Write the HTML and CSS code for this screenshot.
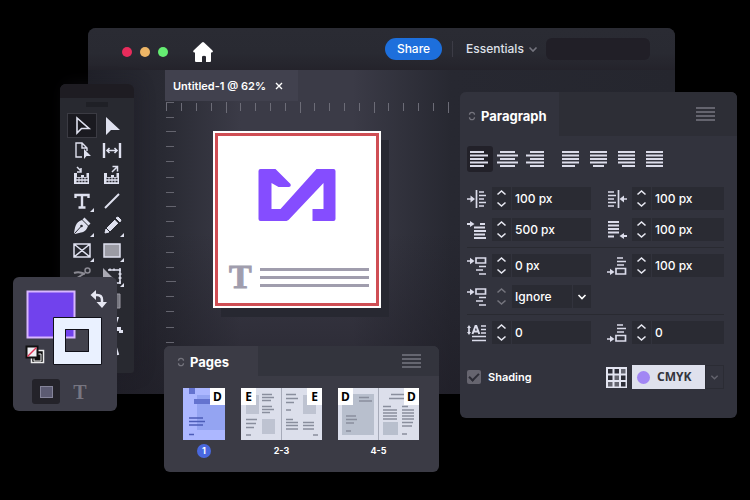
FILE: index.html
```html
<!DOCTYPE html>
<html lang="en">
<head>
<meta charset="utf-8">
<title>Untitled-1</title>
<link rel="stylesheet" href="styles.css">
</head>
<body>
<svg class="sprite" aria-hidden="true">
  <symbol id="updown" viewBox="0 0 19 23"><path d="M5.500 7.500 9.500 4l4 3.500M5.500 15.500l4 3.500 4-3.500" fill="none" stroke="currentColor" stroke-width="1.600"/></symbol>
  <symbol id="chev" viewBox="0 0 10 10"><path d="M1.500 3.500 5 7l3.500-3.500" fill="none" stroke="currentColor" stroke-width="1.600"/></symbol>
  <symbol id="sort" viewBox="0 0 8 10"><path d="M1.500 3.800a2.500 2.500 0 0 1 5 0M1.500 6.200a2.500 2.500 0 0 0 5 0" fill="none" stroke="currentColor" stroke-width="1.300"/></symbol>
  <symbol id="menu" viewBox="0 0 20 14"><path d="M0 1h19M0 5h19M0 9h19M0 13h19" stroke="currentColor" stroke-width="1.400"/></symbol>
  <symbol id="al-left" viewBox="0 0 22 18"><path d="M1 2h14M1 5.500h18M1 9h14M1 12.500h18M1 16h14" stroke="currentColor" stroke-width="2"/></symbol>
  <symbol id="al-center" viewBox="0 0 22 18"><path d="M3 2h15M0 5.500h21M3 9h15M0 12.500h21M3 16h15" stroke="currentColor" stroke-width="2"/></symbol>
  <symbol id="al-right" viewBox="0 0 22 18"><path d="M5 2h14M1 5.500h18M5 9h14M1 12.500h18M5 16h14" stroke="currentColor" stroke-width="2"/></symbol>
  <symbol id="ju-left" viewBox="0 0 22 18"><path d="M1 2h17M1 5.500h17M1 9h17M1 12.500h17M1 16h13" stroke="currentColor" stroke-width="2"/></symbol>
  <symbol id="ju-center" viewBox="0 0 22 18"><path d="M1 2h17M1 5.500h17M1 9h17M1 12.500h17M4 16h11" stroke="currentColor" stroke-width="2"/></symbol>
  <symbol id="ju-right" viewBox="0 0 22 18"><path d="M1 2h17M1 5.500h17M1 9h17M1 12.500h17M5 16h13" stroke="currentColor" stroke-width="2"/></symbol>
  <symbol id="ju-all" viewBox="0 0 22 18"><path d="M1 2h17M1 5.500h17M1 9h17M1 12.500h17M1 16h17" stroke="currentColor" stroke-width="2"/></symbol>
  <symbol id="in-left" viewBox="0 0 20 18"><path d="M9.500 0v18M12 2h5M12 5.500h7M12 9h5M12 12.500h7M12 16h5M0 9h5" stroke="currentColor" stroke-width="1.700"/><path d="M3.500 5.500 8 9l-4.500 3.500z" fill="currentColor"/></symbol>
  <symbol id="in-right" viewBox="0 0 20 18"><path d="M11.500 0v18M1 2h6M1 5.500h8M1 9h6M1 12.500h8M1 16h6M15 9h5" stroke="currentColor" stroke-width="1.700"/><path d="M17 5.500 12.500 9l4.500 3.500z" fill="currentColor"/></symbol>
  <symbol id="in-first" viewBox="0 0 20 18"><path d="M13 3h5M7 6.500h11M7 10h12M7 13.500h11M7 17h12M0 3h4" stroke="currentColor" stroke-width="1.800"/><path d="M3 0 7.500 3 3 6z" fill="currentColor"/></symbol>
  <symbol id="in-last" viewBox="0 0 20 18"><path d="M1 1h11M1 4.500h11M1 8h11M1 11.500h11M1 15.500h6M16 15h4" stroke="currentColor" stroke-width="1.800"/><path d="M17 12 12.500 15l4.500 3z" fill="currentColor"/></symbol>
  <symbol id="sp-before" viewBox="0 0 20 18"><path d="M9 1h9.500v5H9zM12 9.500h7M9 13h7M12 17h7M0 4h4" fill="none" stroke="currentColor" stroke-width="1.700"/><path d="M3 .8 7.500 4 3 7.200z" fill="currentColor"/></symbol>
  <symbol id="sp-after" viewBox="0 0 20 18"><path d="M10 1h6M10 4.500h9M10 8h7M9 11.500h9.500V17H9zM0 15h4" fill="none" stroke="currentColor" stroke-width="1.700"/><path d="M3 11.800 7.500 15 3 18z" fill="currentColor"/></symbol>
  <symbol id="drop" viewBox="0 0 20 18"><path d="M2 3v6M14 2h5M14 5.500h5M14 9h5M5 12.500h14M5 16.500h14" stroke="currentColor" stroke-width="1.700"/><path d="M0 4 2 1l2 3zM0 8l2 3 2-3z" fill="currentColor"/><path d="M5.500 10 8.500 2h.8l3 8M7 7.500h4.500" fill="none" stroke="currentColor" stroke-width="2"/></symbol>
</svg>

<main class="desktop">
  <section class="window">
    <header class="titlebar">
      <div class="lights"><i class="red"></i><i class="amber"></i><i class="green"></i></div>
      <svg class="home" viewBox="0 0 22 22"><path d="M10 1.500q1-1 2 0l8.500 8q1.200 1.500-.5 2h-1V20q0 1-1 1h-4v-5.500q-2-1.500-4 0V21H4q-1 0-1-1v-8.500H2q-1.500-.6-.5-2z" fill="#fff"/></svg>
      <button class="share">Share</button>
      <label class="workspace"><select aria-label="Workspace"><option>Essentials</option></select><svg><use href="#chev"/></svg></label>
      <div class="search"></div>
    </header>
    <div class="document">
      <div class="doc-tab">Untitled-1 @ 62% <button aria-label="Close"><svg viewBox="0 0 8 8"><path d="m1 1 6 6M7 1 1 7" stroke="#fff" stroke-width="1.400"/></svg></button></div>
      <div class="canvas">
        <svg class="ruler-x"><defs><pattern id="tx" width="74" height="12" patternUnits="userSpaceOnUse"><path d="M16.500 2v8M31.500 2v8M46.500 2v8M61.500 1v11M1.500 2v8" stroke="#6c6c77"/></pattern></defs><rect width="100%" height="12" fill="url(#tx)"/></svg>
        <svg class="ruler-y"><defs><pattern id="ty" width="12" height="75" patternUnits="userSpaceOnUse"><path d="M1 1.500h8M1 16.500h8M1 30.500h10M1 45.500h8M1 60.500h8" stroke="#64646e"/></pattern></defs><rect width="12" height="100%" fill="url(#ty)"/></svg>
        <article class="artboard">
          <svg class="logo" viewBox="0 0 77 52"><path d="M2 0h15l15 15q1 3-2 3H20l-7-4v26h9L58 0h17q2 0 2 2v48q0 2-2 2H54V40h11V14L30 51l-2 1H2q-2 0-2-2V2q0-2 2-2z" fill="#854dff"/></svg>
          <div class="caption"><b>T</b><div><i></i><i></i><i></i></div></div>
        </article>
      </div>
    </div>
  </section>

  <aside class="tools" aria-label="Tools">
    <div class="grip"></div>
    <div class="tool-grid">
      <button class="on" aria-label="Selection"><svg viewBox="0 0 24 24"><path d="M7 4v15l4.500-4.500H19z" fill="none" stroke="currentColor" stroke-width="1.600"/></svg></button>
      <button aria-label="Direct selection"><svg viewBox="0 0 24 24"><path d="M6 3v18l5-5h9z" fill="currentColor"/></svg></button>
      <button aria-label="Page"><svg viewBox="0 0 24 24"><path d="M12 18H6V4h6l5 5v3M12 4v5h5" fill="none" stroke="currentColor" stroke-width="1.400"/><path d="M14 10v10l2.500-3H21z" fill="currentColor"/></svg></button>
      <button aria-label="Gap"><svg viewBox="0 0 24 24"><path d="M4 4v15M20 4v15" stroke="currentColor" stroke-width="2.400"/><path d="M7 11.500h10M9.500 9 7 11.500 9.500 14m5-5 2.500 2.500-2.500 2.500" fill="none" stroke="currentColor" stroke-width="1.600"/></svg></button>
      <button aria-label="Content collector"><svg viewBox="0 0 24 24"><path d="M4 9v11h15V9h-2.500v4H14v-2h-3v2H7V9z" fill="currentColor"/><path d="m7 3 4 4M11 4v4H7" fill="none" stroke="currentColor" stroke-width="1.500"/><path d="M6.500 14.500h11M6.500 17.500h11" stroke="#282930" stroke-width="1.400" stroke-dasharray="2 1"/></svg></button>
      <button aria-label="Content placer"><svg viewBox="0 0 24 24"><path d="M4 9v11h15V9h-2.500v4H14v-2h-3v2H7V9z" fill="currentColor"/><path d="m12 8 5-5M12.500 2.500h5v5" fill="none" stroke="currentColor" stroke-width="1.500"/><path d="M6.500 14.500h11M6.500 17.500h11" stroke="#282930" stroke-width="1.400" stroke-dasharray="2 1"/></svg></button>
      <button class="more" aria-label="Type"><svg viewBox="0 0 24 24"><path d="M5.500 9V6h13v3M12 5v13.500M8.500 18.500h7" fill="none" stroke="currentColor" stroke-width="2.400"/></svg></button>
      <button aria-label="Line"><svg viewBox="0 0 24 24"><path d="M5 19 19 5" stroke="currentColor" stroke-width="2"/></svg></button>
      <button class="more" aria-label="Pen"><svg viewBox="0 0 24 24"><path d="m14.500 3.500 6 6-2 2-6-6zM12 6l6 6c-1 3-3 6-7 6.500L5 20l-1-1c1-5 1-11 8-13z" fill="currentColor"/><path d="m4.500 19.500 6.500-7" stroke="#282930"/><circle cx="11.500" cy="12" r="1.300" fill="#282930"/></svg></button>
      <button class="more" aria-label="Pencil"><svg viewBox="0 0 24 24"><path d="m16 4 2-1 3 3-1 2zM15 6l3 3-8 8-3-3zM6 15l3 3-4 1z" fill="currentColor" stroke="currentColor"/><path d="m14 4.500 5.500 5.500" stroke="#282930"/></svg></button>
      <button class="more" aria-label="Frame"><svg viewBox="0 0 24 24"><path d="M4 5h16v13H4zl16 13M20 5 4 18" fill="none" stroke="currentColor" stroke-width="1.500"/></svg></button>
      <button class="more" aria-label="Rectangle"><svg viewBox="0 0 24 24"><path d="M4 5h16v13H4z" fill="#9b9ba4" stroke="currentColor" stroke-width="1.500"/></svg></button>
      <button class="dim" aria-label="Scissors"><svg viewBox="0 0 24 24"><path d="M4 9q5-2 11 1M4 16l11-7" fill="none" stroke="currentColor" stroke-width="2"/><circle cx="17.500" cy="6.500" r="2.500" fill="none" stroke="currentColor" stroke-width="1.500"/></svg></button>
      <button class="more" aria-label="Transform"><svg viewBox="0 0 24 24"><path d="M3 4v10h10z" fill="#aaa9b3"/><path d="M8 6h12v13h-7" fill="none" stroke="currentColor" stroke-width="1.600"/><path d="M10 4.500v2M14 4.500v2M20 4v3M20 17v3M18.500 10h3M18.500 14h3" stroke="currentColor" stroke-width="1.500"/></svg></button>
      <span></span>
      <button aria-label="Gradient"><svg viewBox="0 0 24 24"><path d="M4 5h16v14H4z" fill="#777780" stroke="#9998a2"/></svg></button>
      <span></span>
      <button aria-label="Eyedropper"><svg viewBox="0 0 24 24"><path d="M15 3h4l-2 6zM15 13h6v3h2v3h-4v-2h-4z" fill="currentColor"/></svg></button>
      <span></span>
      <button aria-label="Zoom"><svg viewBox="0 0 24 24"><path d="m15 6 3 10" stroke="currentColor" stroke-width="2.500"/></svg></button>
    </div>
  </aside>

  <aside class="swatches" aria-label="Fill and stroke">
    <svg class="fill-stroke" viewBox="0 0 103 94">
      <path d="M14.500 14.500h47v46h-47z" fill="#7142ed" stroke="#d8b6ff" stroke-width="2"/>
      <path fill-rule="evenodd" d="M40.500 40.500h48v47h-48zM52.500 52.500h23v22h-23z" fill="#eaf1ff" stroke="#111119"/>
      <path d="M53 53h22v21H53z" fill="#42424d"/><path d="M53 53h8v7h-8z" fill="#7142ed"/><path d="M61.500 53v7.500H53" fill="none" stroke="#d8b6ff" stroke-width="2"/>
      <path d="M52.500 52.500h23v22h-23z" fill="none" stroke="#111119"/>
      <path d="M81 18h3q5 0 5 5v3" fill="none" stroke="#e6e7f2" stroke-width="2.500"/><path d="m77.500 18 5.500-5v10zM83.500 25h10.500l-5 6z" fill="#e6e7f2"/>
      <path d="M18.500 73.500h12v12h-12z" fill="#111" stroke="#eee" stroke-width="1.500"/><path d="M21 77h7v7h-7z" fill="#111" stroke="#eee"/>
      <path d="M13.500 69.500h11v11h-11z" fill="#f0f0f4" stroke="#111" stroke-width="2"/><path d="m14.500 79.500 9-9" stroke="#df3659" stroke-width="1.500"/>
    </svg>
    <div class="targets"><button class="on" aria-label="Container"><i></i></button><button aria-label="Text">T</button></div>
  </aside>

  <section class="panel paragraph">
    <header><h2><svg><use href="#sort"/></svg>Paragraph</h2><button aria-label="Paragraph menu"><svg><use href="#menu"/></svg></button></header>
    <div class="body">
      <div class="aligns">
        <button class="on" aria-label="Left"><svg><use href="#al-left"/></svg></button><button aria-label="Center"><svg><use href="#al-center"/></svg></button><button aria-label="Right"><svg><use href="#al-right"/></svg></button>
        <button class="second" aria-label="Justify left"><svg><use href="#ju-left"/></svg></button><button aria-label="Justify center"><svg><use href="#ju-center"/></svg></button><button aria-label="Justify right"><svg><use href="#ju-right"/></svg></button><button aria-label="Justify all"><svg><use href="#ju-all"/></svg></button>
      </div>
      <div class="fields">
        <label class="field"><svg><use href="#in-left"/></svg><button aria-label="Step left indent"><svg><use href="#updown"/></svg></button><input aria-label="Left indent" value="100 px"></label>
        <label class="field"><svg><use href="#in-right"/></svg><button aria-label="Step right indent"><svg><use href="#updown"/></svg></button><input aria-label="Right indent" value="100 px"></label>
        <label class="field"><svg><use href="#in-first"/></svg><button aria-label="Step first line"><svg><use href="#updown"/></svg></button><input aria-label="First line indent" value="500 px"></label>
        <label class="field"><svg><use href="#in-last"/></svg><button aria-label="Step last line"><svg><use href="#updown"/></svg></button><input aria-label="Last line indent" value="100 px"></label>
      </div>
      <div class="fields">
        <label class="field"><svg><use href="#sp-before"/></svg><button aria-label="Step space before"><svg><use href="#updown"/></svg></button><input aria-label="Space before" value="0 px"></label>
        <label class="field"><svg><use href="#sp-after"/></svg><button aria-label="Step space after"><svg><use href="#updown"/></svg></button><input aria-label="Space after" value="100 px"></label>
        <label class="field pick"><svg><use href="#sp-before"/></svg><button class="off" aria-label="Step between"><svg><use href="#updown"/></svg></button><select aria-label="Space between"><option>Ignore</option></select><svg class="arrow"><use href="#chev"/></svg></label>
      </div>
      <div class="fields">
        <label class="field"><svg><use href="#drop"/></svg><button aria-label="Step drop cap lines"><svg><use href="#updown"/></svg></button><input aria-label="Drop cap lines" value="0"></label>
        <label class="field"><svg><use href="#sp-after"/></svg><button aria-label="Step drop cap characters"><svg><use href="#updown"/></svg></button><input aria-label="Drop cap characters" value="0"></label>
      </div>
      <div class="shade">
        <label class="check"><input type="checkbox" checked>Shading</label>
        <label class="color"><svg class="grid-icon" viewBox="0 0 21 21"><path d="M0 0h21v21H0z" fill="#e3e5f1"/><path d="M2 2h4.500v4.500H2zM8.500 2h4.500v4.500H8.500zM15 8.500h4.500V13H15zM2 8.500h4.500V13H2zM15 15h4.500v4.500H15z" fill="#2c2d36"/><path d="M15 2h4.500v4.500H15zM8.500 8.500h4.500V13H8.500zM2 15h4.500v4.500H2zM8.500 15h4.500v4.500H8.500z" fill="#64656f"/></svg><span class="chip"><i></i><select aria-label="Color mode"><option>CMYK</option></select></span><svg class="arrow"><use href="#chev"/></svg></label>
      </div>
    </div>
  </section>

  <section class="panel pages">
    <header><h2><svg><use href="#sort"/></svg>Pages</h2><button aria-label="Pages menu"><svg><use href="#menu"/></svg></button></header>
    <div class="thumbs">
      <figure class="current"><div class="thumb"><svg viewBox="0 0 42 52"><path d="M0 0h42v52H0z" fill="#acb7ff"/><path d="M14 7h28v35H14z" fill="#94a4f2"/><path d="M6 0h6v6H6zM11 11h16v5H11z" fill="#6473cf"/><path d="M6 30h14M6 33.500h16M6 37h14M6 46.500h5" stroke="#4c5cb8" stroke-width="1.300"/></svg><b class="r">D</b></div><figcaption>1</figcaption></figure>
      <figure><div class="thumb"><svg viewBox="0 0 81 52"><path d="M0 0h81v52H0z" fill="#dcdfeb"/><path d="M5 7h13v19H5zM21 31h13v15H21zM62 7h13v19H62z" fill="#bec3d1"/><path d="M40.500 0v52" stroke="#a7abb9"/><path d="M21 6.500h10M21 9.500h12M21 12.500h9M21 18.500h10M21 21.500h12M21 24.500h8M5 31.500h11M5 35.500h10M5 39.500h8M5 47h5M45 6.500h10M45 10.500h12M45 14.500h8M45 22h5M45 31.500h7M45 34.500h12M45 37.500h12M45 41h12M62 34.500h11M62 37.500h11M62 41h11M72 47h5" stroke="#898e9d" stroke-width="1.300"/></svg><b>E</b><b class="r">E</b></div><figcaption>2-3</figcaption></figure>
      <figure><div class="thumb"><svg viewBox="0 0 81 52"><path d="M0 0h81v52H0z" fill="#dcdfeb"/><path d="M4 6h32v41H4zM45 34h15v13H45z" fill="#b8bfcd"/><path d="M40.500 0v52" stroke="#a7abb9"/><path d="M21 9.500h10M21 13h13M8 28h10M8 31.500h11M8 35h8M8 43h5M53 6.500h13M51 10.500h18M45 18.500h8M45 22h14M45 25h14M45 28h14M45 31h14M64 18.500h6M64 22h12M64 25h12M64 28h12M64 31h12M64 34.500h11M64 38h10M64 46h5" stroke="#898e9d" stroke-width="1.300"/></svg><b>D</b><b class="r">D</b></div><figcaption>4-5</figcaption></figure>
    </div>
  </section>
</main>
</body>
</html>
```
FILE: styles.css
```css
* { box-sizing: border-box; }
body { margin: 0; background: #000; color: #fff; font: 500 12px/16px Inter, sans-serif; }
button, input, select { font: inherit; color: inherit; margin: 0; padding: 0; border: 0; background: none; border-radius: 0; }
select { appearance: none; outline: 0; }
button { display: grid; place-items: center; }
svg { display: block; }
i { display: block; }
.sprite { position: absolute; width: 0; height: 0; }
.desktop { position: relative; min-height: 100vh; overflow: hidden; }

.window { position: absolute; inset: 28px 75px 106px 88px; display: flex; flex-direction: column; border-radius: 8px 8px 0 0; overflow: hidden; background: linear-gradient(90deg, #202129, #292a33 13%, #3b3b47 26%, #3b3b47 45%, #272831 62%, #25262e); }
.titlebar { display: flex; align-items: center; height: 42px; padding: 0 25px 0 34px; background: linear-gradient(#2a2b33, #292a32 60%, #24232b); }
.lights { display: flex; gap: 8px; padding-top: 6px; }
.lights i { width: 10px; height: 10px; border-radius: 50%; }
.red { background: #e82c5c; }
.amber { background: #edb566; }
.green { background: #65ed72; }
.home { width: 22px; height: 22px; margin: 6px auto 0 24px; }
.share { width: 57px; height: 22px; border-radius: 11px; background: #1d6fdc; }
.workspace { display: flex; align-items: center; gap: 4px; margin-left: 10px; padding-left: 13px; border-left: 1px solid #3c3c46; color: #dfe0e8; }
.workspace svg { width: 10px; height: 10px; color: #74747e; }
.search { width: 104px; height: 22px; margin-left: 8px; border-radius: 6px; background: #211f27; }
.document { flex: 1; display: flex; flex-direction: column; align-items: flex-start; padding-left: 77px; background: linear-gradient(#0000 50%, #1d1b2499); }
.doc-tab { display: flex; align-items: center; gap: 9px; height: 31px; padding: 0 15px 0 8px; background: #41414e; font-size: 11px; font-weight: 600; }
.doc-tab svg { width: 8px; height: 8px; }
.canvas { display: grid; grid-template: 12px 1fr / 12px 1fr; width: 285px; flex: 1; }
.ruler-x { grid-area: 1 / 1 / 2 / 3; width: 100%; height: 12px; }
.ruler-y { grid-area: 1 / 1 / 3 / 2; width: 12px; height: 244px; }
.artboard { grid-area: 2 / 2; align-self: start; justify-self: start; display: flex; flex-direction: column; width: 168px; height: 177px; margin: 18px 0 0 36px; padding: 32px 8px 14px; background: #fff; outline: 3px solid #cf4e54; outline-offset: -5px; box-shadow: 8px 9px #272831; }
.logo { width: 78px; height: 52px; margin: 6px auto auto 37px; }
.caption { display: flex; align-items: center; gap: 8px; padding: 0 4px 0 8px; color: #a09dad; }
.caption b { font: bold 34px/34px "Liberation Serif", serif; -webkit-text-stroke: 1px; }
.caption div { flex: 1; display: grid; gap: 5px; }
.caption i { height: 3px; background: #a09dad; }

.tools { position: absolute; left: 60px; top: 84px; width: 74px; padding-bottom: 10px; border-radius: 6px 6px 3px 3px; background: #282930; overflow: hidden; box-shadow: 4px 0 16px #1d1c2566; }
.grip { height: 14px; background: #1e1c22; }
.grip::after { content: ""; display: block; width: 22px; height: 5px; margin: 0 auto; background: #1f2026; transform: translateY(18px); }
.tool-grid { display: grid; grid-template-columns: 30px 30px; grid-auto-rows: 25px; padding: 15px 7px 0; color: #dfe1ef; }
.tool-grid button { position: relative; color: inherit; }
.tool-grid svg { width: 24px; height: 24px; }
.tool-grid .on { background: #1a1a20; border: 1px solid #3b3b43; }
.tool-grid .dim { color: #8a8992; }
.more::after { content: ""; position: absolute; right: 3px; bottom: 1px; border: 2px solid; border-left-color: #0000; border-top-color: #0000; }

.swatches { position: absolute; left: 13px; top: 277px; width: 104px; padding-bottom: 7px; border-radius: 6px; background: #3d3d48; }
.fill-stroke { width: 103px; height: 94px; }
.targets { display: flex; gap: 6px; margin: 8px 0 0 19px; }
.targets button { width: 28px; height: 25px; border-radius: 3px; color: #777681; font: bold 20px/20px "Liberation Serif", serif; }
.targets .on { background: #24232a; }
.targets i { width: 13px; height: 12px; background: #5c5b72; border: 1px solid #85849a; }

.panel { position: absolute; border-radius: 6px; background: #32333d; overflow: hidden; }
.panel header { display: flex; align-items: center; justify-content: space-between; background: #2d2e36; }
.panel h2 { display: flex; align-items: center; gap: 5px; margin: 0; font-size: 13px; font-weight: 700; }
.panel h2 svg { width: 8px; height: 10px; color: #74747d; }
.panel header button { margin-right: 21px; color: #777781; }
.panel header button svg { width: 20px; height: 14px; }

.paragraph { right: 13px; top: 92px; width: 277px; }
.paragraph h2 { height: 44px; padding: 4px 12px 0 8px; background: #32333d; }
.body { padding: 10px 13px 29px 7px; }
.aligns { display: flex; gap: 2px; margin-bottom: 9px; }
.aligns button { width: 26px; height: 26px; border-radius: 3px; color: #dbdcea; }
.aligns .on { background: #222129; }
.aligns .second { margin-left: 8px; }
.aligns svg { width: 22px; height: 18px; }
.fields { display: grid; grid-template-columns: 124fr 117fr; gap: 8px 16px; padding: 6px 0; }
.fields + .fields { border-top: 1px solid #292a31; }
.field { display: grid; grid-template-columns: 24px 19px 1fr; column-gap: 1px; height: 23px; align-items: center; color: #dbdcea; }
.field > svg { width: 20px; height: 18px; }
.field button { width: 19px; height: 23px; background: #2a2b33; color: #e6e7f0; }
.field button svg { width: 19px; height: 23px; }
.field .off { background: none; color: #74747d; }
.field input, .field select { width: 100%; height: 23px; padding-left: 3px; background: #2a2b33; color: #fff; }
.pick { grid-template-columns: 24px 19px 1fr 18px; }
.field > .arrow { width: 18px; height: 23px; padding: 6px 4px; background: #2a2b33; color: #fff; }
.shade { display: flex; justify-content: space-between; align-items: center; margin-top: 15px; font-size: 11px; font-weight: 600; }
.check { display: flex; align-items: center; gap: 7px; }
.check input { appearance: none; width: 14px; height: 14px; border-radius: 2px; background: #66656f; display: grid; place-items: center; }
.check input::after { content: ""; width: 8px; height: 4px; border: solid #2d2d36; border-width: 0 0 2px 2px; transform: translateY(-1px) rotate(-45deg); }
.color { display: flex; align-items: center; }
.grid-icon { width: 21px; height: 21px; margin-right: 5px; }
.chip { display: flex; align-items: center; gap: 7px; width: 73px; height: 24px; padding-left: 5px; background: #dfe1ed; color: #34353e; }
.chip i { width: 13px; height: 13px; border-radius: 50%; background: #a286f4; }
.chip select { font: 700 12px/16px "Noto Sans", sans-serif; }
.color .arrow { width: 19px; height: 24px; padding: 6px 4px; color: #63636d; border: 1px solid #2b2c34; }

.pages { left: 164px; top: 346px; width: 275px; background: #3b3b45; }
.pages header { background: #33343d; }
.pages h2 { height: 30px; padding: 2px 29px 0 13px; background: #3b3b45; }
.pages header button { margin-right: 17px; }
.thumbs { display: flex; gap: 16px; padding: 12px 19px 14px; }
figure { display: flex; flex-direction: column; align-items: center; gap: 4px; margin: 0; }
.thumb { position: relative; }
.thumb svg { width: 81px; height: 52px; }
.current .thumb svg { width: 42px; }
.thumb b { position: absolute; left: 0; top: 0; width: 15px; height: 17px; background: #fff; color: #000; font: 700 12px/17px "Noto Sans", sans-serif; text-align: center; }
.thumb .r { left: auto; right: 0; }
figcaption { font-size: 9px; line-height: 14px; font-weight: 700; }
.current figcaption { width: 14px; border-radius: 50%; background: #4968df; text-align: center; }
```
